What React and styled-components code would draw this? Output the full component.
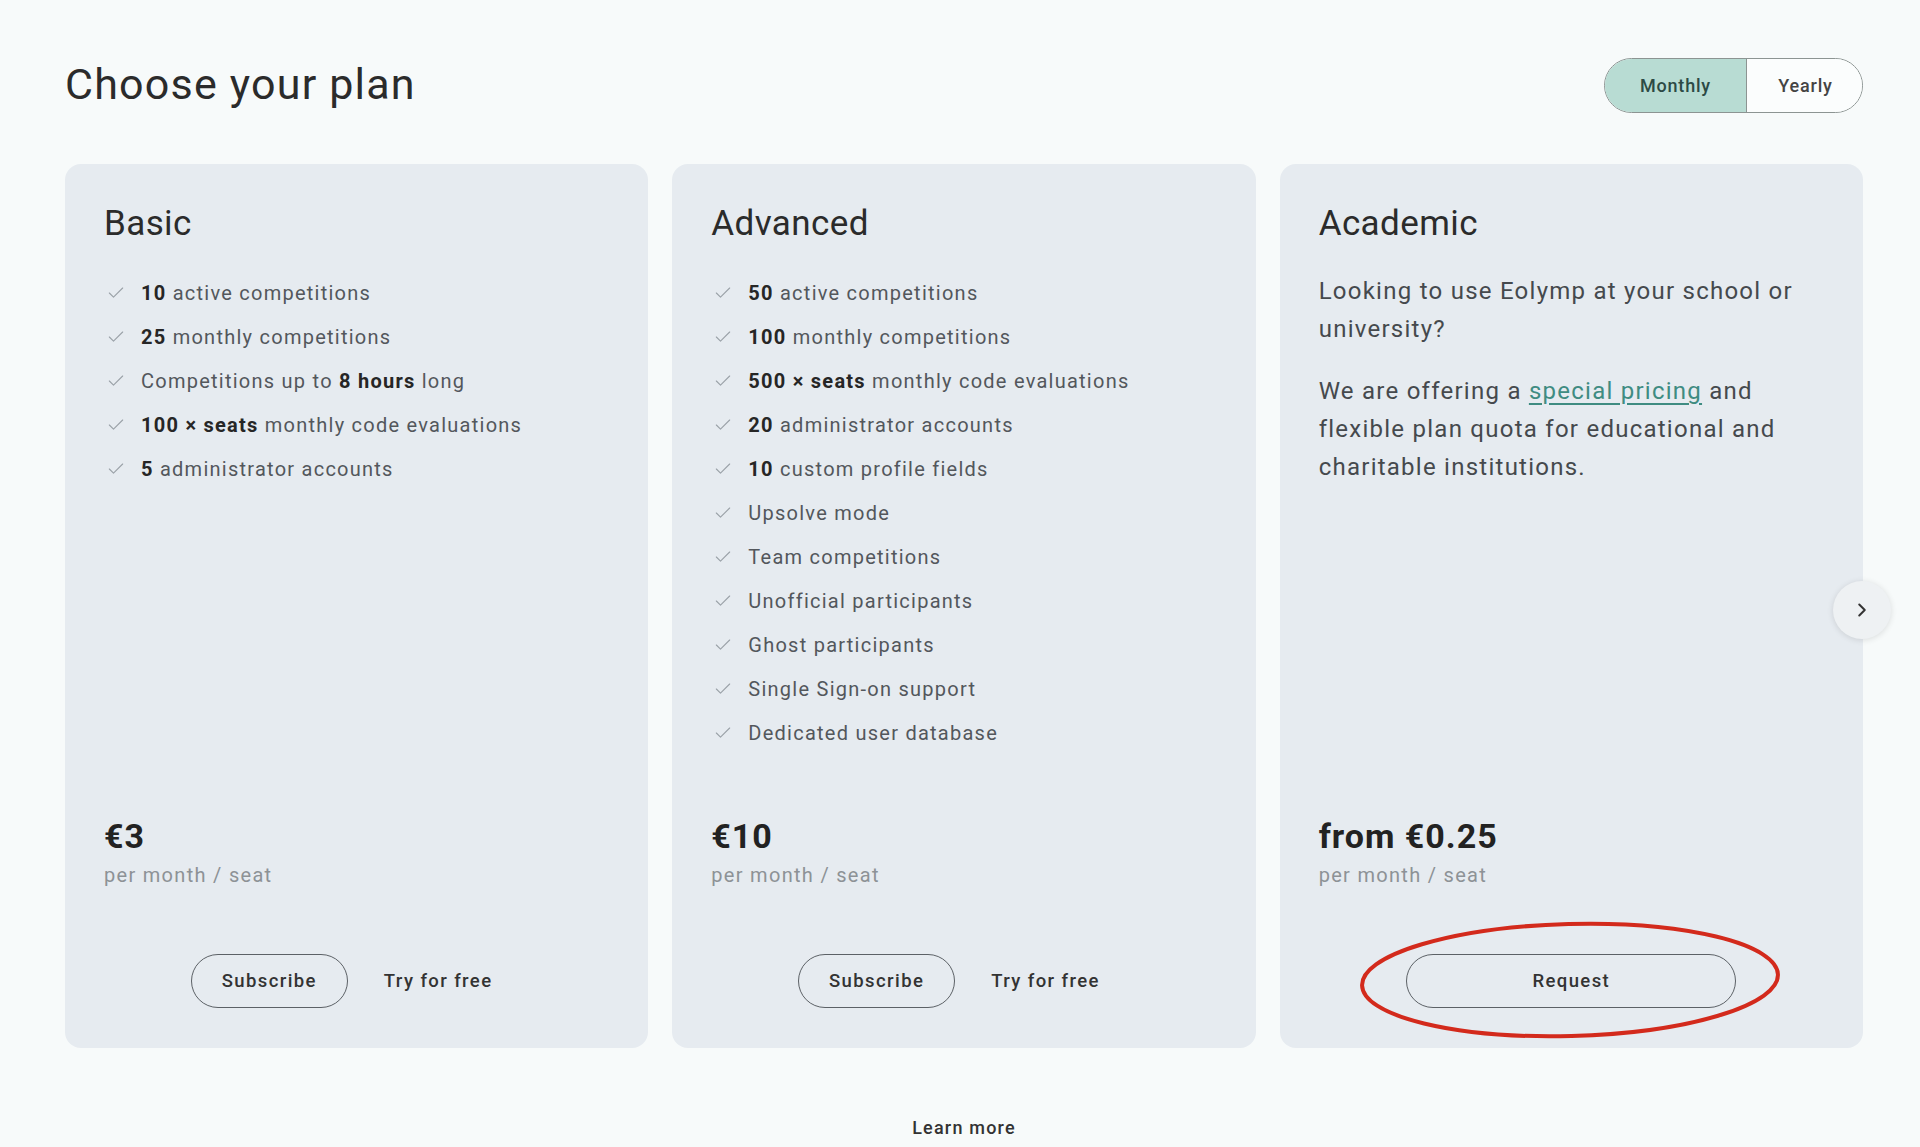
import React from 'react';
import styled, { createGlobalStyle } from 'styled-components';
import { Check, ChevronRight } from 'lucide-react';

const GlobalStyle = createGlobalStyle`
  body {
    margin: 0;
    background: #f7fafa;
    font-family: Roboto, "Liberation Sans", sans-serif;
    color: #2e2e2e;
  }
`;

const Page = styled.main`
  padding: 58px 57px 0 65px;
  min-height: 1147px;
  box-sizing: border-box;
`;

const Header = styled.header`
  display: flex;
  justify-content: space-between;
  align-items: center;
  height: 55px;
`;

const Title = styled.h1`
  margin: 0 0 4px;
  font-size: 43px;
  font-weight: 400;
  letter-spacing: 1.2px;
  color: #2b2b2b;
`;

const Toggle = styled.div`
  display: flex;
  width: 259px;
  height: 55px;
  border: 1.5px solid #8c9492;
  border-radius: 28px;
  overflow: hidden;
  box-sizing: border-box;
`;

const ToggleOption = styled.button`
  flex: 0 0 ${({ width }) => width}px;
  border: none;
  border-left: ${({ divider }) => (divider ? '1.5px solid #8c9492' : 'none')};
  background: ${({ active }) => (active ? '#b8dcd3' : '#fbfdfd')};
  color: ${({ active }) => (active ? '#2c4a45' : '#444')};
  font-family: inherit;
  font-size: 18px;
  font-weight: 500;
  letter-spacing: 0.8px;
  cursor: pointer;
`;

const Carousel = styled.div`
  position: relative;
  margin-top: 51px;
`;

const Cards = styled.div`
  display: grid;
  grid-template-columns: repeat(3, 1fr);
  gap: 24px;
`;

const Card = styled.section`
  display: flex;
  flex-direction: column;
  height: 884px;
  padding: 39px 39px 40px 39px;
  box-sizing: border-box;
  background: #e6ebf0;
  border-radius: 16px;
`;

const CardTitle = styled.h2`
  margin: 0;
  font-size: 35px;
  line-height: 42px;
  font-weight: 400;
  letter-spacing: 0.4px;
  color: #2b2b2b;
`;

const Features = styled.ul`
  list-style: none;
  margin: 26px 0 0;
  padding: 0;
`;

const Feature = styled.li`
  display: flex;
  align-items: center;
  gap: 15px;
  height: 44px;
  font-size: 20px;
  letter-spacing: 1.25px;
  color: #53575c;

  svg {
    flex: 0 0 auto;
    color: #9aa1a7;
    margin-left: 2px;
  }

  b {
    color: #262626;
    font-weight: 700;
  }
`;

const Text = styled.p`
  margin: ${({ first }) => (first ? '27px' : '24px')} 0 0;
  font-size: 24px;
  line-height: 38px;
  letter-spacing: 1.25px;
  color: #45494d;
`;

const Link = styled.a`
  color: #3f8c82;
  text-decoration: underline;
  text-underline-offset: 4px;
`;

const PriceBlock = styled.div`
  margin-top: auto;
  display: flex;
  flex-direction: column;
`;

const Price = styled.div`
  font-size: 34px;
  line-height: 40px;
  font-weight: 700;
  letter-spacing: 1px;
  color: #222;
`;

const PriceNote = styled.div`
  margin-top: 5px;
  font-size: 20px;
  line-height: 28px;
  letter-spacing: 1.3px;
  color: #8d9296;
`;

const Actions = styled.div`
  display: flex;
  justify-content: center;
  align-items: center;
  gap: 16px;
  margin-top: 65px;
  padding-right: ${({ shift }) => shift || 0}px;
`;

const OutlineButton = styled.button`
  height: 54px;
  width: ${({ wide }) => (wide ? '330px' : '157px')};
  border: 1.5px solid #5c6166;
  border-radius: 27px;
  background: transparent;
  font-family: inherit;
  font-size: 18.5px;
  font-weight: 500;
  letter-spacing: 1.4px;
  color: #333;
  cursor: pointer;
`;

const TextButton = styled.button`
  height: 54px;
  padding: 0 20px;
  border: none;
  background: transparent;
  font-family: inherit;
  font-size: 18.5px;
  font-weight: 500;
  letter-spacing: 1.4px;
  color: #333;
  cursor: pointer;
`;

const Highlight = styled.div`
  position: relative;
`;

const Ellipse = styled.svg`
  position: absolute;
  left: -49px;
  top: -34px;
  width: 426px;
  height: 120px;
  pointer-events: none;
  overflow: visible;
`;

const NextButton = styled.button`
  position: absolute;
  right: -28px;
  top: 50%;
  transform: translateY(calc(-50% + 4px));
  width: 58px;
  height: 58px;
  border-radius: 50%;
  border: none;
  background: #eef1f3;
  box-shadow: 0 1px 6px rgba(0, 0, 0, 0.12);
  display: flex;
  align-items: center;
  justify-content: center;
  color: #333;
  cursor: pointer;
`;

const Footer = styled.div`
  margin-top: 68px;
  text-align: center;
`;

const LearnMore = styled.a`
  font-size: 18px;
  line-height: 24px;
  font-weight: 500;
  letter-spacing: 1.2px;
  color: #333;
  text-decoration: none;
`;

const basicFeatures = [
  <><b>10</b> active competitions</>,
  <><b>25</b> monthly competitions</>,
  <>Competitions up to <b>8 hours</b> long</>,
  <><b>100 × seats</b> monthly code evaluations</>,
  <><b>5</b> administrator accounts</>,
];

const advancedFeatures = [
  <><b>50</b> active competitions</>,
  <><b>100</b> monthly competitions</>,
  <><b>500 × seats</b> monthly code evaluations</>,
  <><b>20</b> administrator accounts</>,
  <><b>10</b> custom profile fields</>,
  <>Upsolve mode</>,
  <>Team competitions</>,
  <>Unofficial participants</>,
  <>Ghost participants</>,
  <>Single Sign-on support</>,
  <>Dedicated user database</>,
];

const FeatureList = ({ items }) => (
  <Features>
    {items.map((item, i) => (
      <Feature key={i}>
        <Check size={20} strokeWidth={1.3} />
        <span>{item}</span>
      </Feature>
    ))}
  </Features>
);

const App = () => {
  const [period, setPeriod] = React.useState('monthly');

  return (
    <Page>
      <GlobalStyle />
      <Header>
        <Title>Choose your plan</Title>
        <Toggle>
          <ToggleOption width={141} active={period === 'monthly'} onClick={() => setPeriod('monthly')}>
            Monthly
          </ToggleOption>
          <ToggleOption width={118} divider active={period === 'yearly'} onClick={() => setPeriod('yearly')}>
            Yearly
          </ToggleOption>
        </Toggle>
      </Header>

      <Carousel>
        <Cards>
          <Card>
            <CardTitle>Basic</CardTitle>
            <FeatureList items={basicFeatures} />
            <PriceBlock>
              <Price>€3</Price>
              <PriceNote>per month / seat</PriceNote>
            </PriceBlock>
            <Actions shift={10}>
              <OutlineButton>Subscribe</OutlineButton>
              <TextButton>Try for free</TextButton>
            </Actions>
          </Card>

          <Card>
            <CardTitle>Advanced</CardTitle>
            <FeatureList items={advancedFeatures} />
            <PriceBlock>
              <Price>€10</Price>
              <PriceNote>per month / seat</PriceNote>
            </PriceBlock>
            <Actions shift={10}>
              <OutlineButton>Subscribe</OutlineButton>
              <TextButton>Try for free</TextButton>
            </Actions>
          </Card>

          <Card>
            <CardTitle>Academic</CardTitle>
            <Text first>Looking to use Eolymp at your school or university?</Text>
            <Text>
              We are offering a <Link href="#">special pricing</Link> and flexible plan quota for
              educational and charitable institutions.
            </Text>
            <PriceBlock>
              <Price>from €0.25</Price>
              <PriceNote>per month / seat</PriceNote>
            </PriceBlock>
            <Actions>
              <Highlight>
                <OutlineButton wide>Request</OutlineButton>
                <Ellipse viewBox="0 0 426 120">
                  <ellipse
                    cx="213"
                    cy="60"
                    rx="208"
                    ry="56"
                    transform="rotate(-1.5 213 60)"
                    fill="none"
                    stroke="#d32a1c"
                    strokeWidth="4"
                  />
                </Ellipse>
              </Highlight>
            </Actions>
          </Card>
        </Cards>
        <NextButton aria-label="Next">
          <ChevronRight size={22} strokeWidth={2.2} />
        </NextButton>
      </Carousel>

      <Footer>
        <LearnMore href="#">Learn more</LearnMore>
      </Footer>
    </Page>
  );
};

export default App;
